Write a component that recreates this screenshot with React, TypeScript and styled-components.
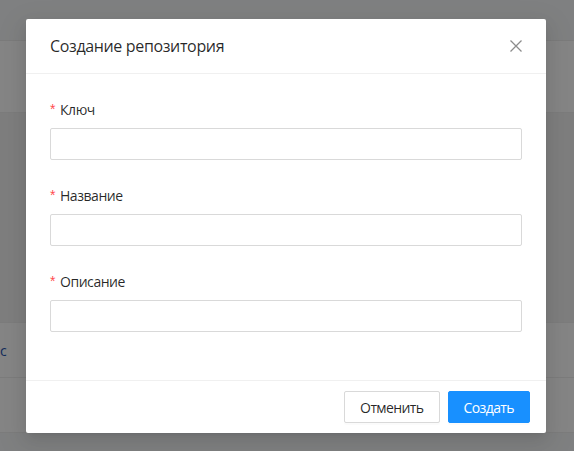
import React from "react";
import styled, { createGlobalStyle } from "styled-components";

const GlobalStyle = createGlobalStyle`
  html, body {
    margin: 0;
    padding: 0;
    width: 100%;
    height: 100%;
    overflow: hidden;
  }
  body {
    font-family: "Open Sans", "Noto Sans", sans-serif;
    background: #e8e9eb;
  }
`;

const Page = styled.div`
  position: relative;
  width: 574px;
  height: 451px;
  overflow: hidden;
  background: #e8e9eb;
`;

const PageHeader = styled.div`
  height: 41px;
  box-sizing: border-box;
  padding-left: 68px;
  border-bottom: 1px solid #e0e0e0;
  overflow: hidden;
`;

const PageTitle = styled.h1`
  margin: -32px 0 0;
  font-size: 24px;
  font-weight: 600;
  color: #1b2330;
`;

const Card = styled.div`
  background: #f2f2f2;
`;

type RowProps = { height: number; tone?: string };
const TableRow = styled.div<RowProps>`
  height: ${({ height }) => height}px;
  box-sizing: border-box;
  border-bottom: 1px solid #e2e2e2;
  background: ${({ tone }) => tone || "#f2f2f2"};
  display: flex;
  align-items: center;
  font-size: 14px;
  color: #1f4fa6;
`;

const LinkCell = styled.span`
  margin-left: 0;
`;

const Mask = styled.div`
  position: absolute;
  inset: 0;
  background: rgba(0, 0, 0, 0.45);
  display: flex;
  justify-content: flex-start;
  align-items: flex-start;
  padding: 19px 0 0 26px;
  box-sizing: border-box;
`;

const Modal = styled.div`
  width: 520px;
  background: #fff;
  border-radius: 2px;
  box-shadow: 0 3px 6px -4px rgba(0, 0, 0, 0.12),
    0 6px 16px 0 rgba(0, 0, 0, 0.08), 0 9px 28px 8px rgba(0, 0, 0, 0.05);
  font-family: "Open Sans", "Noto Sans", sans-serif;
  color: rgba(0, 0, 0, 0.85);
`;

const Header = styled.div`
  display: flex;
  align-items: center;
  justify-content: space-between;
  padding: 16px 24px;
  border-bottom: 1px solid #f0f0f0;
`;

const Title = styled.div`
  font-size: 16px;
  line-height: 22px;
  font-weight: 400;
  letter-spacing: -0.35px;
  color: rgba(0, 0, 0, 0.85);
`;

const CloseButton = styled.button`
  width: 22px;
  height: 22px;
  margin-right: -5px;
  padding: 0;
  border: none;
  background: none;
  display: grid;
  place-items: center;
  cursor: pointer;
`;

const Body = styled.div`
  padding: 24px;
`;

const Field = styled.div`
  margin-bottom: 24px;
`;

const Label = styled.label`
  display: flex;
  align-items: center;
  height: 22px;
  padding-bottom: 8px;
  font-size: 14px;
  letter-spacing: -0.45px;
  color: rgba(0, 0, 0, 0.85);
`;

const Required = styled.span`
  color: #ff4d4f;
  margin-right: 5px;
  font-family: "Liberation Sans", sans-serif;
  font-size: 14px;
`;

const Input = styled.input`
  display: block;
  width: 100%;
  height: 32px;
  box-sizing: border-box;
  border: 1px solid #d9d9d9;
  border-radius: 2px;
  padding: 4px 11px;
  font-size: 14px;
  outline: none;
  font-family: inherit;
`;

const Footer = styled.div`
  display: flex;
  justify-content: flex-end;
  gap: 8px;
  padding: 10px 16px;
  border-top: 1px solid #f0f0f0;
`;

type ButtonProps = { primary?: boolean };
const Button = styled.button<ButtonProps>`
  height: 32px;
  padding: 0 15px;
  font-size: 14px;
  letter-spacing: -0.6px;
  font-family: inherit;
  border-radius: 2px;
  cursor: pointer;
  border: 1px solid ${({ primary }) => (primary ? "#1890ff" : "#d9d9d9")};
  background: ${({ primary }) => (primary ? "#1890ff" : "#fff")};
  color: ${({ primary }) => (primary ? "#fff" : "rgba(0, 0, 0, 0.85)")};
  box-shadow: 0 2px 0 rgba(0, 0, 0, 0.016);
`;

const fields = ["Ключ", "Название", "Описание"];

export default function App() {
  return (
    <>
      <GlobalStyle />
      <Page>
        <PageHeader>
          <PageTitle>Проекты</PageTitle>
        </PageHeader>
        <Card>
          <TableRow height={72} />
          <TableRow height={210} tone="#e6e6e6" />
          <TableRow height={55}>
            <LinkCell>c</LinkCell>
          </TableRow>
          <TableRow height={55} />
        </Card>
        <Mask>
          <Modal>
            <Header>
              <Title>Создание репозитория</Title>
              <CloseButton aria-label="Закрыть">
                <svg width="14" height="14" viewBox="0 0 14 14">
                  <path
                    d="M1.5 1.5 L12.5 12.5 M12.5 1.5 L1.5 12.5"
                    stroke="rgba(0,0,0,0.45)"
                    strokeWidth="1.3"
                    fill="none"
                  />
                </svg>
              </CloseButton>
            </Header>
            <Body>
              {fields.map((f) => (
                <Field key={f}>
                  <Label>
                    <Required>*</Required>
                    {f}
                  </Label>
                  <Input />
                </Field>
              ))}
            </Body>
            <Footer>
              <Button>Отменить</Button>
              <Button primary>Создать</Button>
            </Footer>
          </Modal>
        </Mask>
      </Page>
    </>
  );
}
